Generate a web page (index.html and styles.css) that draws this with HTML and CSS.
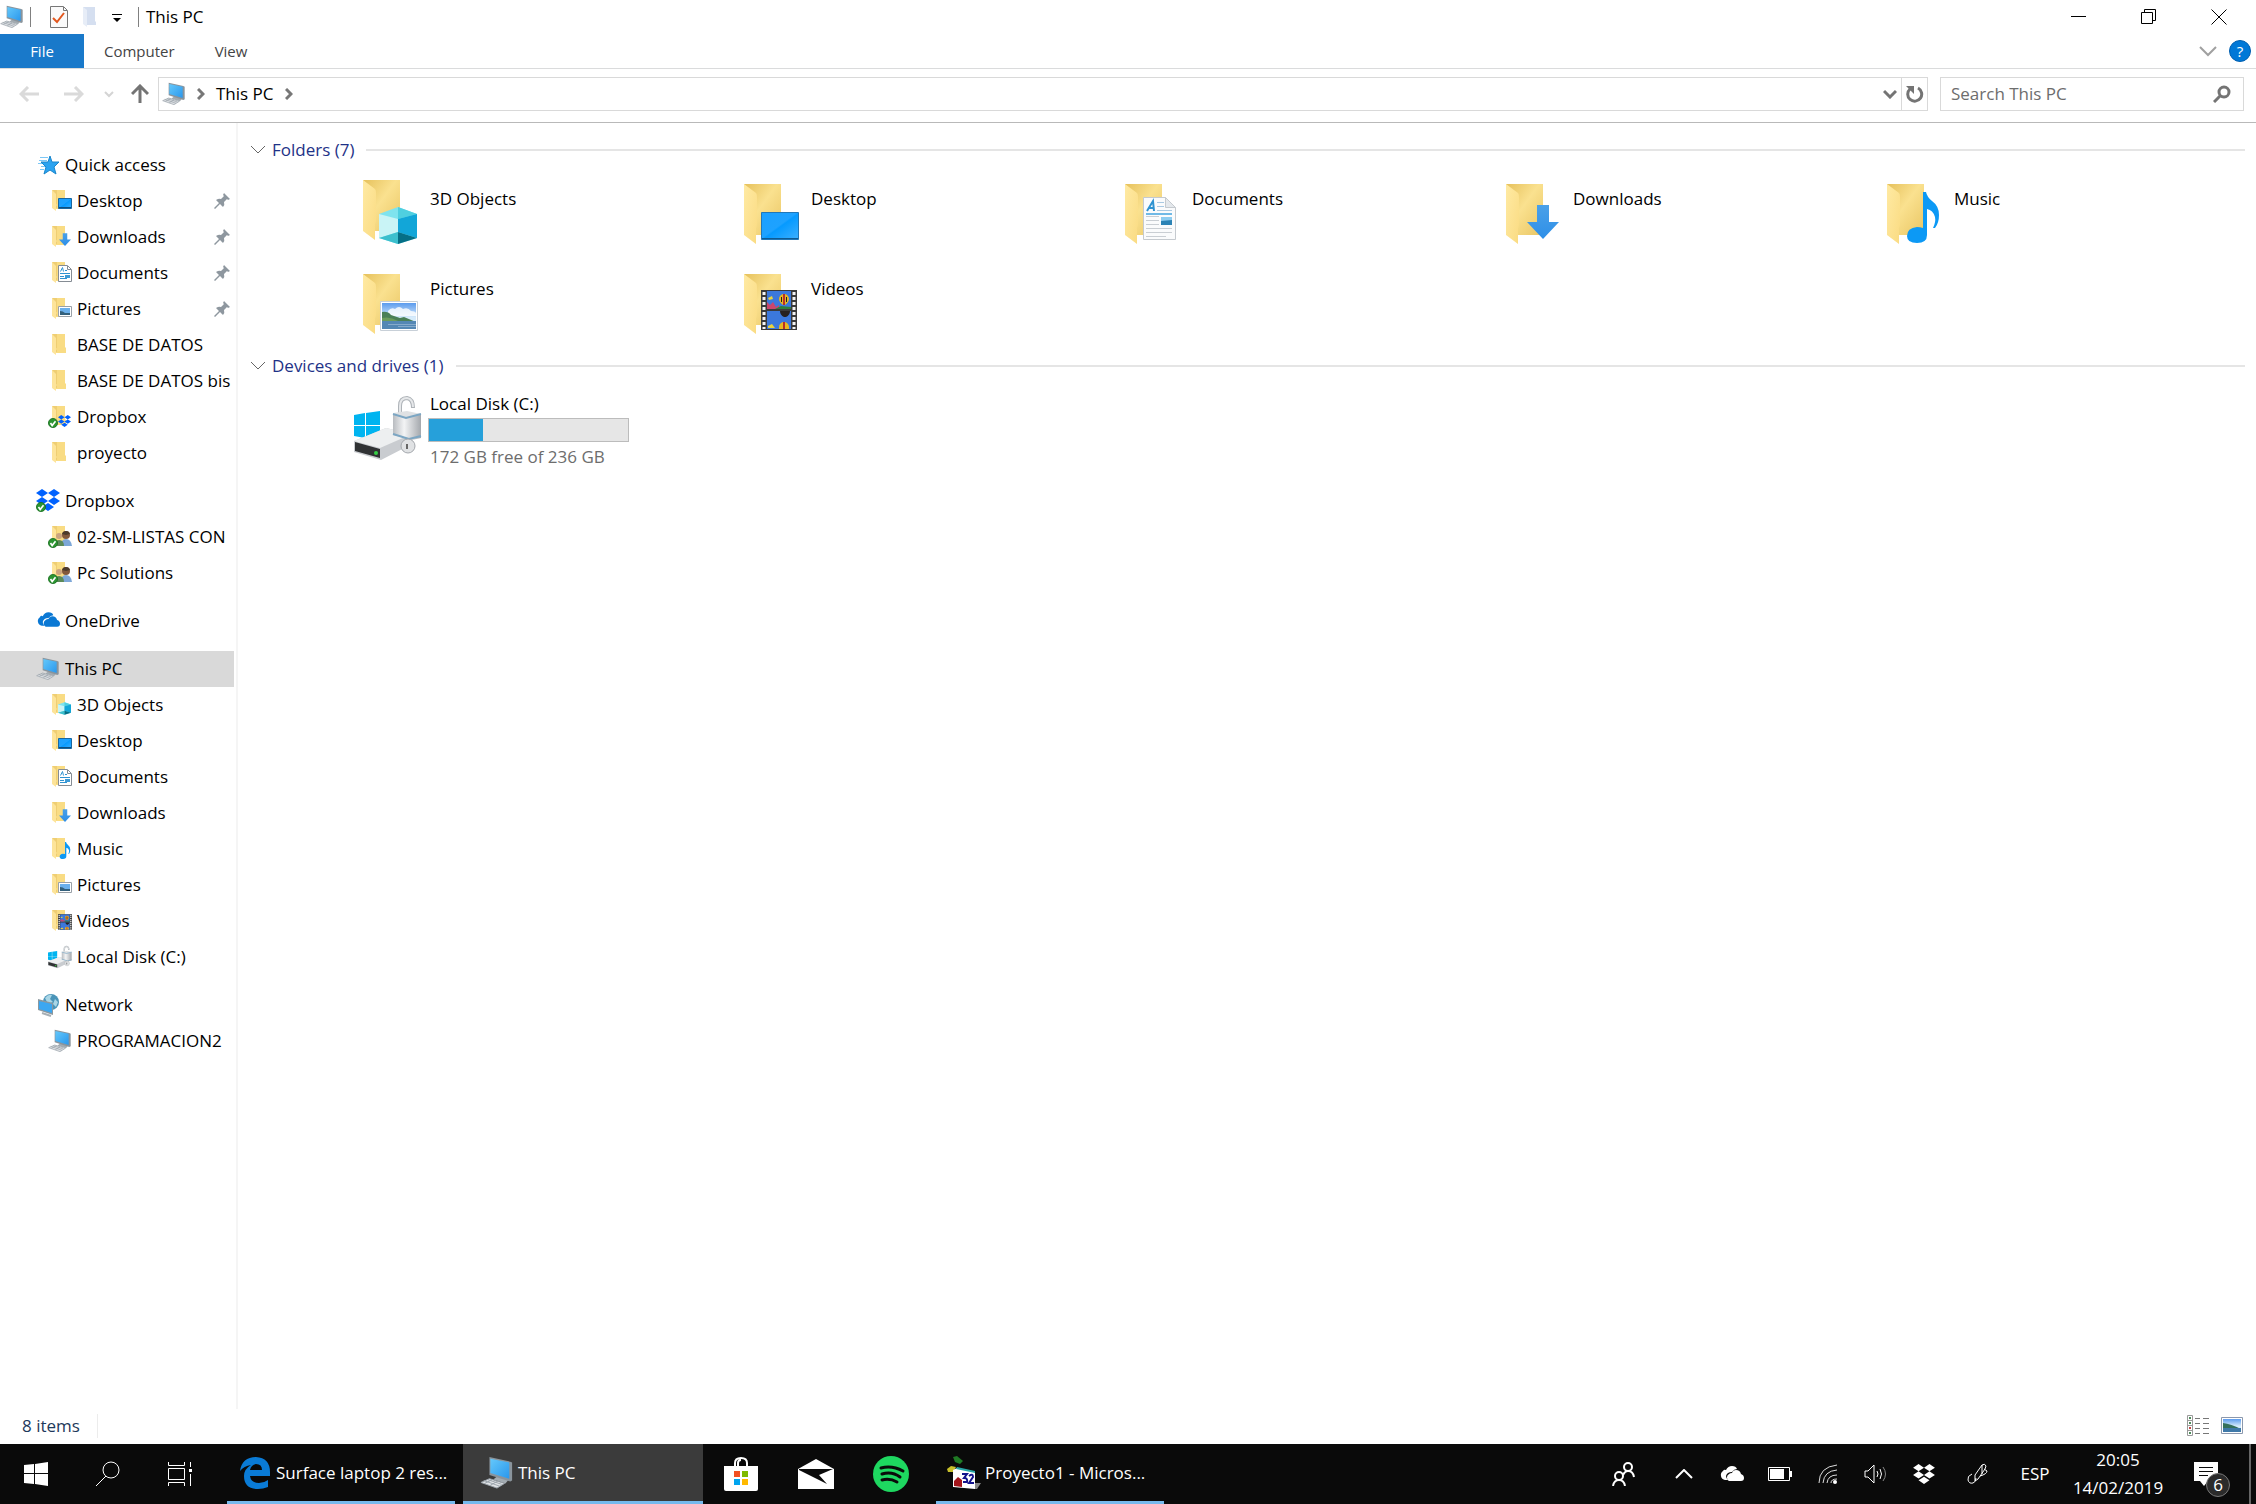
FILE: index.html
```html
<!DOCTYPE html>
<html lang="en">
<head>
    <meta charset="UTF-8">
    <meta name="viewport" content="width=device-width, initial-scale=1.0">
    <title>This PC</title>
    <link rel="stylesheet" href="styles.css">
</head>
<body>
    <!-- Shared icons -->
    <svg class="defs" width="0" height="0" aria-hidden="true">
        <defs>
            <linearGradient id="gBack" x1="0" y1="0" x2="1" y2="1">
                <stop offset="0" stop-color="#e6c15c"/>
                <stop offset=".45" stop-color="#fae18f"/>
                <stop offset="1" stop-color="#e9c563"/>
            </linearGradient>
            <linearGradient id="gFront" x1="0" y1="0" x2="1" y2="1">
                <stop offset="0" stop-color="#ffeaa3"/>
                <stop offset="1" stop-color="#fadb82"/>
            </linearGradient>
            <linearGradient id="gScreen" x1="0" y1="0" x2="1" y2="1">
                <stop offset="0" stop-color="#1ba0ff"/>
                <stop offset=".48" stop-color="#1ea2ff"/>
                <stop offset=".52" stop-color="#069aff"/>
                <stop offset="1" stop-color="#3eb0ff"/>
            </linearGradient>
            <linearGradient id="gMonitor" x1="0" y1="0" x2="1" y2="1">
                <stop offset="0" stop-color="#64c8fb"/>
                <stop offset="1" stop-color="#2a97ec"/>
            </linearGradient>
            <linearGradient id="gSky" x1="0" y1="0" x2="0" y2="1">
                <stop offset="0" stop-color="#5b9bee"/>
                <stop offset=".55" stop-color="#d6ebfb"/>
            </linearGradient>
            <linearGradient id="gMetal" x1="0" y1="0" x2="1" y2="0">
                <stop offset="0" stop-color="#b9bcc0"/>
                <stop offset=".4" stop-color="#f3f4f5"/>
                <stop offset="1" stop-color="#a4a8ad"/>
            </linearGradient>
            <linearGradient id="gDown" x1="0" y1="0" x2="0" y2="1">
                <stop offset="0" stop-color="#4aa0e8"/>
                <stop offset="1" stop-color="#2e8fe8"/>
            </linearGradient>
        </defs>

        <symbol id="folder-lg" viewBox="0 0 64 64">
            <path fill="url(#gBack)" d="M3 4h37v51H15z"/>
            <path fill="url(#gFront)" d="M3 4l12 9q1 1 1 4v28l-1 3v16L3 55z"/>
        </symbol>
        <symbol id="folder" viewBox="0 0 24 24">
            <path fill="#f9dc84" d="M4 1h13v13l1 1v5H8z"/>
            <path fill="#e8c467" d="M4 1h5v18H8z" opacity=".6"/>
            <path fill="#fde49a" d="M4 1l4 4v10l1 1-1 1v5l-4-3z"/>
        </symbol>
        <symbol id="picture" viewBox="0 0 38 30">
            <path fill="#fff" stroke="#c8d0d8" d="M.5.5h37v29H.5z"/>
            <path fill="url(#gSky)" d="M2 2h34v26H2z"/>
            <path fill="#fff" opacity=".8" d="M8 10q3-4 7-2 4-4 8 0 5-2 8 2 4 0 5 2v3H8z"/>
            <path fill="#4b8057" d="M2 11q6-1 9 3l9 3 4-1 12 5H2z"/>
            <path fill="#6c9c5c" d="M2 17q8-2 16 3H2z"/>
            <path fill="#5387b4" d="M2 20h34v8H2z"/>
            <path fill="#85aacb" d="M8 23h28v1H8zm10 2h18v1H18z"/>
        </symbol>
        <symbol id="film" viewBox="0 0 36 40">
            <path fill="#3a3a3a" d="M0 0h36v40H0z"/>
            <path stroke="#f4f4f4" stroke-width="3" stroke-dasharray="3 2" d="M3 2v37M33 2v37"/>
            <path fill="#3b78dc" d="M6 1h24v18H6zm0 20h24v18H6z"/>
            <path fill="#c9466e" d="M6 19v-7l3 3 3-3 3 5 3-2v4z"/>
            <path fill="#2f7e3c" d="M14 19l6-3 10 1v2z"/>
            <path fill="#e9d33f" d="M7 8l4-2 1 3-4 1zm0 28l4-2 3 4H7z"/>
            <path fill="#e8b722" d="M18 9a5 5 0 0 1 10 0q0 3-4 6h-2q-4-3-4-6zm0 28a5 5 0 0 1 10 0v2H18z"/>
            <path fill="#b82d29" d="M22 4h2v11h-2zM22 32h2v7h-2z"/>
            <path fill="#26201f" d="M19 21h10q0 4-4 6h-2q-4-2-4-6zM20 7h1v5h-1zm5 0h1v5h-1z"/>
        </symbol>
        <symbol id="doc" viewBox="0 0 33 43">
            <path fill="#fafbfc" stroke="#c5cacf" d="M.5.5h22l10 10v32H.5z"/>
            <path fill="#e4e8ec" stroke="#c5cacf" d="M22.5.5v10h10z"/>
            <path stroke="#a9c9e2" d="M14 5.500h7M14 9.500h7M14 13.500h15"/>
            <path stroke="#c9ced3" d="M3 19.500h13M3 23.500h13M3 27.500h13M3 31.500h26M3 35.500h26M3 39.500h20"/>
            <path stroke="#6fb9e6" stroke-width="2" d="M3 17h26"/>
            <path fill="none" stroke="#2f93d1" stroke-width="2" d="M4 14L10 4l1 10M6 11h5"/>
            <path fill="#2c83b5" d="M18 20h11v8H18z"/>
            <path fill="#8cccf0" d="M18 20h11v3l-11 1z"/>
        </symbol>
        <symbol id="doc-sm" viewBox="0 0 14 17">
            <path fill="#fff" stroke="#858c94" d="M.5.5h9l4 4v12H.5z"/>
            <path fill="none" stroke="#858c94" d="M9.500 1v3.500H13"/>
            <path fill="none" stroke="#2f93d1" d="M2.500 6.500l2-4 1 4M7 5.500h2M2 8.500h10M2 11.500h4M2 13.500h7"/>
            <path fill="#3f9bd6" d="M7 10h5v3H7z"/>
        </symbol>
        <symbol id="cube" viewBox="0 0 38 37">
            <path fill="#7fe3ee" d="M19 0l19 7v24l-19 6L0 31V7z"/>
            <path fill="#4fcfe0" d="M19 0l19 7-19 5z"/>
            <path fill="#c9f4f6" d="M0 7l19 5v13L0 31z"/>
            <path fill="#12a6d8" d="M38 7l-19 5v13l19 6z"/>
            <path fill="#3cbfcd" d="M0 31l19-6v12z"/>
            <path fill="#056f86" d="M19 25l19 6-19 6z"/>
        </symbol>
        <symbol id="arrow-down" viewBox="0 0 32 34">
            <path fill="url(#gDown)" d="M10 0h12v17h10L16 34 0 17h10z"/>
        </symbol>
        <symbol id="note" viewBox="0 0 32 51">
            <path fill="#0c99f5" d="M16 0h3q1 5 6 9 7 5 7 14 0 8-4 13h-2q3-6 2-11-2-7-8-8v26q0 8-10 8Q0 51 0 44q0-8 10-9 3 0 6 1z"/>
        </symbol>
        <symbol id="pc" viewBox="0 0 36 36">
            <path fill="#a3abb1" d="M20 20l11 4-4 5-13-4z"/>
            <path fill="#8a949c" d="M10 1l22 5 2 1v19l-2 1-22-7z"/>
            <path fill="url(#gMonitor)" d="M11 3l20 4v17l-20-6z"/>
            <path fill="#dfe2e5" stroke="#9aa3aa" d="M1 28l9-4 16 5-8 5z"/>
            <path fill="none" stroke="#9aa3aa" d="M4 26l17 6M8 25l15 5M13 25l-8 4M18 27l-7 4"/>
        </symbol>
        <symbol id="dropbox" viewBox="0 0 24 22">
            <path d="M6 0l6 4-6 4-6-4zm12 0l6 4-6 4-6-4zM6 8l6 4-6 4-6-4zm12 0l6 4-6 4-6-4zm-6 6l6 4-6 4-6-4z"/>
        </symbol>
        <symbol id="check" viewBox="0 0 12 12">
            <circle cx="6" cy="6" r="5.500" fill="#2b9430" stroke="#1c7023"/>
            <path fill="none" stroke="#fff" stroke-width="2" d="M3 6l2 3 4-5"/>
        </symbol>
        <symbol id="star" viewBox="0 0 24 24">
            <path stroke="#7cc7f6" d="M4 4.500h8M3 7.500h8M2 10.500h6M5 13.500h4M4 16.500h4"/>
            <path fill="#2ba3f0" stroke="#1a86cc" d="M14 3l2 6h7l-5 5 2 7-6-4-6 4 2-7-5-5h7z"/>
        </symbol>
        <symbol id="cloud" viewBox="0 0 24 16">
            <path d="M5 14A5 5 0 0 1 3 5q1-2 3-1 2-4 6-4 4 0 5 3-3 0-5 3-5 0-6 4 0 2 2 4z"/>
            <path d="M9 15a4 4 0 0 1 0-7q1-1 3-1 1-3 4-3 4 0 5 4 3 1 3 4t-3 3z"/>
        </symbol>
        <symbol id="people" viewBox="0 0 24 24">
            <circle cx="18" cy="10" r="4" fill="#82583c"/>
            <path fill="#7da7d8" d="M13 21q0-7 5-7t6 7z"/>
            <circle cx="11" cy="11" r="3" fill="#caa47f"/>
            <path fill="#5c8a58" d="M6 21q0-6 5-6t5 6z"/>
            <path fill="#4c3a2b" d="M14 9q1-3 4-3t4 3l-4 1z"/>
        </symbol>
        <symbol id="drive" viewBox="0 0 68 64">
            <path fill="#00b4f0" d="M0 19l11-2v12H0zm12-2l14-2v14H12zM0 30h11v12L0 40zm12 0h14v14l-14-2z"/>
            <path fill="#c9ccd0" d="M0 45l32-13 26 6v10L27 64 0 56z"/>
            <path fill="#edeff0" d="M0 45l32-13 26 6-32 14z"/>
            <path fill="#303234" d="M1 46l25 7v9L1 55z"/>
            <circle cx="22" cy="57" r="2" fill="#35cf45"/>
            <path fill="none" stroke="#aeb3b8" stroke-width="4" d="M46 20V10q0-8 7-8 6 1 6 10"/>
            <path fill="none" stroke="#e6e8ea" stroke-width="2" d="M46 20V10q0-8 7-8 6 1 6 9"/>
            <path fill="url(#gMetal)" d="M39 18l12 4 16-4v24l-9 2-19-5z"/>
            <path fill="#dfe1e3" d="M39 17l14-2 14 3-15 4z"/>
            <path fill="none" stroke="#7ca6c3" stroke-width="2" d="M39 18l13 4 15-4M39 38l16 5 12-3"/>
            <circle cx="54" cy="50" r="7" fill="#e0e2e4" stroke="#a4a8ad"/>
            <path stroke="#666" stroke-width="2" d="M53 48v5"/>
        </symbol>
        <symbol id="network" viewBox="0 0 24 24">
            <circle cx="15" cy="9" r="8" fill="#4a94b8"/>
            <path fill="#a9d6e6" d="M9 5q3-4 7-3l-2 4 3 3-5 2zM19 6l3 3-2 5-3-3z"/>
            <path fill="#8b989f" d="M2 6l15 4v12L2 17z"/>
            <path fill="#3ca7f1" d="M3 8l13 3v9L3 16z"/>
            <path stroke="#a7afb5" stroke-width="2" d="M6 20l9 3"/>
        </symbol>
        <symbol id="pin" viewBox="0 0 16 16">
            <path fill="#8e979f" d="M10 0l6 6-2 1-1-1-3 3q1 3-1 5L6 11l-5 5-1-1 5-5-3-3q3-2 5-1l3-3-1-1z"/>
        </symbol>

        <!-- Small folder icons with their badge -->
        <symbol id="sm-desktop" viewBox="0 0 24 24">
            <use href="#folder"/>
            <path fill="url(#gScreen)" stroke="#1a679f" d="M10.500 9.500h13v10h-13z"/>
            <path stroke="#0c4f80" d="M11 18.500h12"/>
        </symbol>
        <symbol id="sm-downloads" viewBox="0 0 24 24">
            <use href="#folder"/>
            <use href="#arrow-down" x="11" y="8" width="12" height="13"/>
        </symbol>
        <symbol id="sm-documents" viewBox="0 0 24 24">
            <use href="#folder"/>
            <use href="#doc-sm" x="10" y="4" width="14" height="17"/>
        </symbol>
        <symbol id="sm-pictures" viewBox="0 0 24 24">
            <use href="#folder"/>
            <path fill="#fff" stroke="#9aa1a8" d="M10.500 9.500h13v10h-13z"/>
            <path fill="#6bb0ec" d="M12 11h10v7H12z"/>
            <path fill="#33607c" d="M12 14q3 0 5 2h5v2H12z"/>
        </symbol>
        <symbol id="sm-objects" viewBox="0 0 24 24">
            <use href="#folder"/>
            <use href="#cube" x="10" y="9" width="13" height="13"/>
        </symbol>
        <symbol id="sm-music" viewBox="0 0 24 24">
            <use href="#folder"/>
            <use href="#note" x="11" y="5" width="12" height="17"/>
        </symbol>
        <symbol id="sm-videos" viewBox="0 0 24 24">
            <use href="#folder"/>
            <use href="#film" x="10" y="5" width="14" height="16"/>
        </symbol>
        <symbol id="sm-dropbox" viewBox="0 0 24 24">
            <use href="#folder"/>
            <use href="#dropbox" x="10" y="10" width="13" height="12" fill="#0061fe"/>
            <use href="#check" x="0" y="13" width="10" height="10"/>
        </symbol>
        <symbol id="sm-shared" viewBox="0 0 24 24">
            <use href="#folder"/>
            <use href="#people"/>
            <use href="#check" x="0" y="13" width="10" height="10"/>
        </symbol>
    </svg>

    <header class="titlebar">
        <svg class="icon-24"><use href="#pc"/></svg>
        <span class="sep"></span>
        <div class="quick-tools">
            <button type="button" aria-label="Properties">
                <svg width="18" height="22" viewBox="0 0 18 22">
                    <path fill="#fafafa" stroke="#777" d="M.5.5h13l4 4v17H.5z"/>
                    <path fill="none" stroke="#777" d="M13.500 1v3.500H17"/>
                    <path fill="none" stroke="#e2571e" stroke-width="2" d="M3 12l4 4 7-9"/>
                </svg>
            </button>
            <button type="button" aria-label="New folder">
                <svg width="16" height="22" viewBox="0 0 16 22">
                    <path fill="#d5dff0" d="M1 1h12v14l1 1v3H4z"/>
                    <path fill="#e7edf7" d="M1 1l4 3v17l-4-3z"/>
                </svg>
            </button>
            <button type="button" aria-label="Customize">
                <svg width="10" height="10" viewBox="0 0 10 10"><path d="M0 2h10v1H0zm1 4h8L5 10z"/></svg>
            </button>
        </div>
        <span class="sep"></span>
        <h1>This PC</h1>
        <div class="window-buttons">
            <button type="button" aria-label="Minimize">
                <svg width="16" height="16" viewBox="0 0 16 16"><path stroke="#000" d="M0 7.500h15"/></svg>
            </button>
            <button type="button" aria-label="Restore">
                <svg width="16" height="16" viewBox="0 0 16 16"><path fill="none" stroke="#000" d="M.5 3.500h11v11H.5zM3.500 3V.5h11v11H12"/></svg>
            </button>
            <button type="button" aria-label="Close">
                <svg width="16" height="16" viewBox="0 0 16 16"><path stroke="#000" d="M.5.5l15 15M15.500.5l-15 15"/></svg>
            </button>
        </div>
    </header>

    <nav class="ribbon">
        <button type="button" class="tab file">File</button>
        <button type="button" class="tab">Computer</button>
        <button type="button" class="tab">View</button>
        <div class="ribbon-right">
            <button type="button" aria-label="Expand the ribbon">
                <svg width="18" height="12" viewBox="0 0 18 12"><path fill="none" stroke="#a0a0a0" stroke-width="2" d="M1 2l8 8 8-8"/></svg>
            </button>
            <button type="button" class="help" aria-label="Help">?</button>
        </div>
    </nav>

    <div class="toolbar">
        <div class="history">
            <button type="button" aria-label="Back">
                <svg width="20" height="16" viewBox="0 0 20 16"><path fill="none" stroke="#dadada" stroke-width="3" d="M20 8H2M9 1L2 8l7 7"/></svg>
            </button>
            <button type="button" aria-label="Forward">
                <svg width="20" height="16" viewBox="0 0 20 16"><path fill="none" stroke="#dadada" stroke-width="3" d="M0 8h18M11 1l7 7-7 7"/></svg>
            </button>
            <button type="button" class="recent" aria-label="Recent locations">
                <svg width="10" height="8" viewBox="0 0 10 8"><path fill="none" stroke="#d4d4d4" stroke-width="2" d="M1 2l4 4 4-4"/></svg>
            </button>
            <button type="button" class="up" aria-label="Up">
                <svg width="18" height="20" viewBox="0 0 18 20"><path fill="none" stroke="#747474" stroke-width="3" d="M9 19V3M1 10l8-8 8 8"/></svg>
            </button>
        </div>
        <div class="address">
            <svg class="icon-24"><use href="#pc"/></svg>
            <svg width="8" height="12" viewBox="0 0 8 12"><path fill="none" stroke="#777" stroke-width="3" d="M1 1l5 5-5 5"/></svg>
            <a href="#">This PC</a>
            <svg width="8" height="12" viewBox="0 0 8 12"><path fill="none" stroke="#777" stroke-width="3" d="M1 1l5 5-5 5"/></svg>
            <button type="button" class="drop" aria-label="Previous locations">
                <svg width="14" height="10" viewBox="0 0 14 10"><path fill="none" stroke="#747474" stroke-width="3" d="M1 2l6 6 6-6"/></svg>
            </button>
            <button type="button" class="refresh" aria-label="Refresh">
                <svg width="18" height="18" viewBox="0 0 18 18">
                    <path fill="none" stroke="#747474" stroke-width="3" d="M12 3a7 7 0 1 1-8 1"/>
                    <path fill="#747474" d="M0 1h8v8z"/>
                </svg>
            </button>
        </div>
        <form class="search">
            <input type="text" placeholder="Search This PC" aria-label="Search This PC">
            <button type="button" aria-label="Search">
                <svg width="18" height="18" viewBox="0 0 18 18"><circle cx="11" cy="7" r="5" fill="none" stroke="#747474" stroke-width="3"/><path stroke="#747474" stroke-width="3" d="M8 10l-7 7"/></svg>
            </button>
        </form>
    </div>

    <div class="body">
        <nav class="sidebar">
            <ul>
                <li><a href="#" class="group"><svg><use href="#star"/></svg><span>Quick access</span></a></li>
                <li><a href="#"><svg><use href="#sm-desktop"/></svg><span>Desktop</span><svg class="pin"><use href="#pin"/></svg></a></li>
                <li><a href="#"><svg><use href="#sm-downloads"/></svg><span>Downloads</span><svg class="pin"><use href="#pin"/></svg></a></li>
                <li><a href="#"><svg><use href="#sm-documents"/></svg><span>Documents</span><svg class="pin"><use href="#pin"/></svg></a></li>
                <li><a href="#"><svg><use href="#sm-pictures"/></svg><span>Pictures</span><svg class="pin"><use href="#pin"/></svg></a></li>
                <li><a href="#"><svg><use href="#folder"/></svg><span>BASE DE DATOS</span></a></li>
                <li><a href="#"><svg><use href="#folder"/></svg><span>BASE DE DATOS bis</span></a></li>
                <li><a href="#"><svg><use href="#sm-dropbox"/></svg><span>Dropbox</span></a></li>
                <li><a href="#"><svg><use href="#folder"/></svg><span>proyecto</span></a></li>
            </ul>
            <ul>
                <li><a href="#" class="group"><svg viewBox="0 0 24 24"><use href="#dropbox" width="24" height="22" fill="#0061fe"/><use href="#check" y="13" width="10" height="10"/></svg><span>Dropbox</span></a></li>
                <li><a href="#"><svg><use href="#sm-shared"/></svg><span>02-SM-LISTAS CON</span></a></li>
                <li><a href="#"><svg><use href="#sm-shared"/></svg><span>Pc Solutions</span></a></li>
            </ul>
            <ul>
                <li><a href="#" class="group"><svg viewBox="0 0 24 24"><use href="#cloud" x="1" y="3" width="23" height="16" fill="#0a78d4"/></svg><span>OneDrive</span></a></li>
            </ul>
            <ul>
                <li><a href="#" class="group selected"><svg><use href="#pc"/></svg><span>This PC</span></a></li>
                <li><a href="#"><svg><use href="#sm-objects"/></svg><span>3D Objects</span></a></li>
                <li><a href="#"><svg><use href="#sm-desktop"/></svg><span>Desktop</span></a></li>
                <li><a href="#"><svg><use href="#sm-documents"/></svg><span>Documents</span></a></li>
                <li><a href="#"><svg><use href="#sm-downloads"/></svg><span>Downloads</span></a></li>
                <li><a href="#"><svg><use href="#sm-music"/></svg><span>Music</span></a></li>
                <li><a href="#"><svg><use href="#sm-pictures"/></svg><span>Pictures</span></a></li>
                <li><a href="#"><svg><use href="#sm-videos"/></svg><span>Videos</span></a></li>
                <li><a href="#"><svg><use href="#drive"/></svg><span>Local Disk (C:)</span></a></li>
            </ul>
            <ul>
                <li><a href="#" class="group"><svg><use href="#network"/></svg><span>Network</span></a></li>
                <li><a href="#"><svg><use href="#pc"/></svg><span>PROGRAMACION2</span></a></li>
            </ul>
        </nav>

        <main class="content">
            <section>
                <h2>
                    <svg width="16" height="10" viewBox="0 0 16 10"><path fill="none" stroke="#666" d="M1 1l7 7 7-7"/></svg>
                    Folders (7)
                </h2>
                <div class="tiles">
                    <a href="#" class="tile">
                        <svg viewBox="0 0 64 64"><use href="#folder-lg" y="-4" width="64" height="64"/><use href="#cube" x="19" y="27" width="38" height="37"/></svg>
                        <span>3D Objects</span>
                    </a>
                    <a href="#" class="tile">
                        <svg viewBox="0 0 64 64"><use href="#folder-lg"/><path fill="url(#gScreen)" stroke="#2177b8" d="M20.500 32.500h37v27h-37z"/><path stroke="#0e5a92" d="M21 58.500h36"/></svg>
                        <span>Desktop</span>
                    </a>
                    <a href="#" class="tile">
                        <svg viewBox="0 0 64 64"><use href="#folder-lg"/><use href="#doc" x="21" y="17" width="33" height="43"/></svg>
                        <span>Documents</span>
                    </a>
                    <a href="#" class="tile">
                        <svg viewBox="0 0 64 64"><use href="#folder-lg"/><use href="#arrow-down" x="24" y="25" width="32" height="34"/></svg>
                        <span>Downloads</span>
                    </a>
                    <a href="#" class="tile">
                        <svg viewBox="0 0 64 64"><use href="#folder-lg"/><use href="#note" x="23" y="12" width="32" height="51"/></svg>
                        <span>Music</span>
                    </a>
                    <a href="#" class="tile">
                        <svg viewBox="0 0 64 64"><use href="#folder-lg"/><use href="#picture" x="20" y="31" width="38" height="30"/></svg>
                        <span>Pictures</span>
                    </a>
                    <a href="#" class="tile">
                        <svg viewBox="0 0 64 64"><use href="#folder-lg"/><use href="#film" x="20" y="20" width="36" height="40"/></svg>
                        <span>Videos</span>
                    </a>
                </div>
            </section>

            <section>
                <h2>
                    <svg width="16" height="10" viewBox="0 0 16 10"><path fill="none" stroke="#666" d="M1 1l7 7 7-7"/></svg>
                    Devices and drives (1)
                </h2>
                <div class="tiles">
                    <a href="#" class="tile drive">
                        <svg><use href="#drive"/></svg>
                        <div class="drive-info">
                            <span id="diskName">Local Disk (C:)</span>
                            <div class="bar" role="progressbar" aria-labelledby="diskName" aria-valuenow="27">
                                <div class="bar-fill" style="width: 27%"></div>
                            </div>
                            <span class="free">172 GB free of 236 GB</span>
                        </div>
                    </a>
                </div>
            </section>
        </main>
    </div>

    <footer class="statusbar">
        <span class="count">8 items</span>
        <div class="view-buttons">
            <button type="button" aria-label="Details view">
                <svg width="22" height="22" viewBox="0 0 22 22">
                    <path fill="none" stroke="#9a9a9a" d="M.5.5h5v20h-5zM1 5.500h5M1 10.500h5M1 15.500h5"/>
                    <path stroke="#777" d="M8 3.500h5M16 3.500h6M8 8.500h5M16 8.500h6M8 13.500h5M16 13.500h6M8 18.500h5M16 18.500h6"/>
                    <path fill="#4d8a5a" d="M2 2h2v2H2zm0 5h2v2H2zm0 10h2v2H2z"/>
                    <path fill="#c14545" d="M2 12h2v2H2z"/>
                </svg>
            </button>
            <button type="button" aria-label="Large icons view">
                <svg width="22" height="17" viewBox="0 0 22 17">
                    <path fill="#fff" stroke="#8b98ad" d="M.5.5h21v16H.5z"/>
                    <path fill="url(#gSky)" d="M2 2h18v13H2z"/>
                    <path fill="#35705c" d="M2 6q8 1 18 6H2z"/>
                    <path fill="#3f79a8" d="M2 11h18v4H2z"/>
                </svg>
            </button>
        </div>
    </footer>

    <div class="taskbar">
        <button type="button" class="task" aria-label="Start">
            <svg width="24" height="24" viewBox="0 0 24 24"><path fill="#fff" d="M0 3l10-1v9H0zm11-1l13-2v11H11zM0 12h10v10L0 21zm11 0h13v12l-13-2z"/></svg>
        </button>
        <button type="button" class="task" aria-label="Search">
            <svg width="26" height="26" viewBox="0 0 26 26"><circle cx="16" cy="9" r="8" fill="none" stroke="#fff"/><path stroke="#fff" d="M11 15L1 25"/></svg>
        </button>
        <button type="button" class="task" aria-label="Task view">
            <svg width="26" height="24" viewBox="0 0 26 24"><path fill="none" stroke="#fff" d="M1.500 0v3.500h16V0M1.500 6.500h16v11h-16zM1.500 24v-3.500h16V24M23.500 0v5M23.500 12v12"/><path fill="#fff" d="M22 7h3v3h-3z"/></svg>
        </button>
        <button type="button" class="app first">
            <svg viewBox="0 0 34 34"><path fill="#0a7bd6" d="M2 15Q4 1 18 1q14 1 14 15v4H12q1 7 9 7 5 0 9-3v7q-5 2-10 2Q6 33 6 20q0-7 7-11Q6 10 2 15zm10-1h12q0-6-6-6-5 1-6 6z"/></svg>
            Surface laptop 2 res...
        </button>
        <button type="button" class="app active">
            <svg><use href="#pc"/></svg>
            This PC
        </button>
        <button type="button" class="launch" aria-label="Store">
            <svg width="36" height="36" viewBox="0 0 36 36">
                <path fill="none" stroke="#fff" stroke-width="2" d="M12 11V7q0-5 6-5t6 5v4M15 11V7q0-3 3-3"/>
                <path fill="#fff" d="M1 10h34v23q0 2-2 2H3q-2 0-2-2z"/>
                <path fill="#f25022" d="M11 15h6v6h-6z"/><path fill="#7fba00" d="M19 15h6v6h-6z"/>
                <path fill="#00a4ef" d="M11 23h6v6h-6z"/><path fill="#ffb900" d="M19 23h6v6h-6z"/>
            </svg>
        </button>
        <button type="button" class="launch" aria-label="Mail">
            <svg width="36" height="30" viewBox="0 0 36 30"><path fill="#fff" d="M0 10L18 0l18 10v20H0z"/><path fill="#0a0a0a" d="M1 10h34l-14 6 8 9L1 11z"/></svg>
        </button>
        <button type="button" class="launch" aria-label="Spotify">
            <svg width="36" height="36" viewBox="0 0 36 36">
                <circle cx="18" cy="18" r="18" fill="#1ed760"/>
                <path fill="none" stroke="#0a0a0a" stroke-width="3" stroke-linecap="round" d="M8 12q11-3 22 3M9 18q10-3 18 3M9 24q8-2 15 2"/>
            </svg>
        </button>
        <button type="button" class="app">
            <svg viewBox="0 0 34 34">
                <path fill="#1f7a24" d="M6 1l4-1 6 5-3 3-5-2z"/>
                <path fill="#c8c02a" d="M0 13l4-3 5 1-3 5H1z"/>
                <path fill="#888" d="M28 27h6l-4 6h-3z"/>
                <path fill="#fff" d="M6 14l4-2 18 4v17L6 31z"/>
                <path fill="#2aa8a8" d="M10 11l18 4v2L9 13z"/>
                <path fill="#a3141a" d="M7 25l4-4 4 3v7l-8-1z"/>
                <path fill="none" stroke="#12128c" stroke-width="2" d="M15 18h5l-3 4q4 0 3 4h-4M22 20q4-3 4 1l-4 6h5"/>
            </svg>
            Proyecto1 - Micros...
        </button>

        <div class="tray">
            <button type="button" class="people" aria-label="People">
                <svg width="24" height="24" viewBox="0 0 24 24"><g fill="none" stroke="#fff" stroke-width="2"><circle cx="16" cy="5" r="4"/><circle cx="7" cy="14" r="4"/><path d="M11 13q2-4 5-4 5 0 6 6M1 24q1-6 6-6 5 0 6 6"/></g></svg>
            </button>
            <button type="button" aria-label="Hidden icons">
                <svg width="18" height="10" viewBox="0 0 18 10"><path fill="none" stroke="#fff" stroke-width="2" d="M1 9l8-8 8 8"/></svg>
            </button>
            <button type="button" aria-label="OneDrive">
                <svg width="24" height="16" fill="#fff"><use href="#cloud"/></svg>
            </button>
            <button type="button" aria-label="Battery">
                <svg width="24" height="14" viewBox="0 0 24 14"><path fill="none" stroke="#fff" d="M.5.5h21v13H.5z"/><path fill="#fff" d="M2 2h14v10H2zM22 4h2v6h-2z"/></svg>
            </button>
            <button type="button" aria-label="Wi-Fi">
                <svg width="20" height="20" viewBox="0 0 20 20"><g fill="none" stroke="#ddd"><path d="M1 19Q1 3 19 1M5 19Q6 7 19 6M9 19q1-8 10-8M13 19q0-4 6-4"/></g><circle cx="17" cy="18" r="2" fill="#fff"/></svg>
            </button>
            <button type="button" aria-label="Volume">
                <svg width="24" height="20" viewBox="0 0 24 20"><g fill="none" stroke="#fff"><path d="M1 7h3l6-6v18l-6-6H1zM13 7q2 3 0 6M16 5q3 5 0 10"/><path stroke="#888" d="M19 3q5 7 0 14"/></g></svg>
            </button>
            <button type="button" aria-label="Dropbox">
                <svg width="22" height="20" fill="#fff"><use href="#dropbox"/></svg>
            </button>
            <button type="button" class="pen" aria-label="Windows Ink">
                <svg width="22" height="22" viewBox="0 0 22 22"><g fill="none" stroke="#fff"><path d="M8 18V12l7-10q3-2 4 1l-1 3-7 10zM15 2v9M5 11q-5 2-4 6 1 4 5 3 3-1 3-5M13 13q7-2 7-5l-3-2"/></g></svg>
            </button>
            <button type="button" class="lang">ESP</button>
            <button type="button" class="clock"><span>20:05</span><span>14/02/2019</span></button>
            <button type="button" class="notify" aria-label="Notifications">
                <svg width="24" height="24" viewBox="0 0 24 24"><path fill="#fff" d="M0 0h24v19H14l-4 5-4-5H0z"/><path stroke="#0a0a0a" stroke-width="1" d="M5 5.500h14M5 9.500h14M5 13.500h9"/></svg>
                <span class="badge">6</span>
            </button>
            <button type="button" class="show-desktop" aria-label="Show desktop"></button>
        </div>
    </div>
</body>
</html>
```
FILE: styles.css
```css
* {
    margin: 0;
    padding: 0;
    box-sizing: border-box;
}

body {
    font-family: 'Segoe UI', 'Open Sans', sans-serif;
    font-size: 17px;
    line-height: 24px;
    color: #000;
    background: #fff;
    min-height: 100vh;
    display: flex;
    flex-direction: column;
}

svg {
    display: block;
    flex-shrink: 0;
}

button {
    display: flex;
    align-items: center;
    justify-content: center;
    font: inherit;
    color: inherit;
    background: none;
    border: none;
}

a {
    color: inherit;
    text-decoration: none;
}

ul {
    list-style: none;
}

.icon-24 {
    width: 24px;
    height: 24px;
}

/* Title bar */
.titlebar {
    display: flex;
    align-items: center;
    height: 34px;
}

.titlebar h1 {
    font-size: 17px;
    font-weight: normal;
    margin-left: 7px;
}

.sep {
    width: 1px;
    height: 20px;
    margin-left: 6px;
    background: #808080;
}

.quick-tools {
    display: flex;
    align-items: center;
    gap: 14px;
    margin: 0 10px 0 19px;
}

.window-buttons {
    display: flex;
    margin: 0 2px 0 auto;
}

.window-buttons button {
    width: 70px;
    height: 34px;
}

/* Ribbon tabs */
.ribbon {
    display: flex;
    height: 35px;
    border-bottom: 1px solid #dadbdc;
    font-size: 15px;
    color: #444;
}

.tab {
    padding: 0 20px;
}

.tab.file {
    width: 84px;
    background: #1979ca;
    color: #fff;
}

.ribbon-right {
    display: flex;
    align-items: center;
    gap: 12px;
    margin-left: auto;
    padding-right: 5px;
}

.help {
    width: 22px;
    height: 22px;
    border: 1px solid #005fb0;
    border-radius: 50%;
    background: #0078d7;
    color: #fff;
}

/* Address bar */
.toolbar {
    display: flex;
    align-items: center;
    height: 54px;
    padding: 0 12px 3px 0;
    border-bottom: 1px solid #b9b9b9;
}

.history {
    display: flex;
    align-items: center;
    width: 158px;
    padding-left: 19px;
    gap: 25px;
}

.history .recent {
    margin-left: -5px;
}

.history .up {
    margin-left: -8px;
}

.address {
    flex: 1;
    display: flex;
    align-items: center;
    height: 34px;
    padding-left: 3px;
    gap: 11px;
    border: 1px solid #d9d9d9;
}

.address .drop {
    width: 22px;
    margin-left: auto;
}

.address .refresh {
    align-self: stretch;
    width: 26px;
    margin-left: -11px;
    border-left: 1px solid #d9d9d9;
}

.search {
    display: flex;
    align-items: center;
    width: 304px;
    height: 34px;
    margin-left: 12px;
    padding: 0 12px 0 10px;
    border: 1px solid #d9d9d9;
}

.search input {
    flex: 1;
    min-width: 0;
    font: inherit;
    border: none;
    outline: none;
}

.search input::placeholder {
    color: #6d6d6d;
    opacity: 1;
}

/* Navigation pane */
.body {
    flex: 1;
    display: flex;
}

.sidebar {
    width: 238px;
    padding: 24px 2px 0 0;
    border-right: 2px solid #f5f5f5;
}

.sidebar ul {
    margin-bottom: 12px;
}

.sidebar a {
    display: flex;
    align-items: center;
    gap: 5px;
    height: 36px;
    padding-left: 48px;
    overflow: hidden;
    white-space: nowrap;
}

.sidebar a.group {
    padding-left: 36px;
}

.sidebar a.selected {
    background: #d9d9d9;
}

.sidebar svg {
    width: 24px;
    height: 24px;
}

.sidebar .pin {
    width: 16px;
    height: 16px;
    margin-left: auto;
    margin-right: 4px;
}

/* Content */
.content {
    flex: 1;
    padding: 12px 11px 0 12px;
}

.content h2 {
    display: flex;
    align-items: center;
    height: 30px;
    gap: 6px;
    font-size: 17px;
    font-weight: normal;
    color: #1e3287;
}

.content h2::after {
    content: '';
    flex: 1;
    height: 2px;
    margin-left: 6px;
    background: #e5e5e5;
}

.tiles {
    display: grid;
    grid-template-columns: repeat(auto-fill, 381px);
    row-gap: 26px;
    padding: 15px 0 17px 80px;
}

.tile {
    display: flex;
    gap: 6px;
    height: 64px;
    padding-left: 30px;
}

.tile > svg {
    width: 64px;
    height: 64px;
}

.tile > span {
    margin-top: 7px;
}

.tile.drive {
    gap: 8px;
    padding-left: 24px;
}

.tile.drive > svg {
    width: 68px;
}

.drive-info {
    margin-top: -4px;
}

.drive-info .bar {
    width: 201px;
    height: 24px;
    margin: 2px 0 3px -2px;
    border: 1px solid #bcbcbc;
    background: #e6e6e6;
}

.bar-fill {
    height: 100%;
    background: #26a0da;
}

.drive-info span {
    display: block;
}

.drive-info .free {
    color: #6d6d6d;
}

/* Status bar */
.statusbar {
    display: flex;
    align-items: center;
    justify-content: space-between;
    height: 35px;
    padding: 0 13px 2px 22px;
    color: #1e395b;
}

.count {
    padding-right: 17px;
    border-right: 1px solid #ececec;
}

.view-buttons {
    display: flex;
    gap: 12px;
}

/* Taskbar */
.taskbar {
    display: flex;
    height: 60px;
    background: #0a0a0a;
    color: #fff;
}

.task {
    width: 72px;
}

.launch {
    width: 75px;
}

.app {
    justify-content: flex-start;
    gap: 4px;
    width: 228px;
    margin-left: 8px;
    padding-left: 11px;
    border-bottom: 3px solid #76b9ed;
    white-space: nowrap;
}

.app.first {
    margin-left: 11px;
}

.app.active {
    width: 240px;
    padding-left: 17px;
    background: #3b3b3b;
}

.app svg {
    width: 34px;
    height: 34px;
}

.tray {
    display: flex;
    margin-left: auto;
}

.tray button {
    width: 48px;
}

.tray .people {
    width: 72px;
}

.tray .pen {
    width: 60px;
}

.tray .lang {
    width: 54px;
}

.tray .clock {
    flex-direction: column;
    gap: 4px;
    width: 112px;
}

.tray .notify {
    position: relative;
    width: 64px;
    margin-right: 11px;
}

.badge {
    position: absolute;
    right: 8px;
    bottom: 7px;
    width: 24px;
    height: 24px;
    border: 1px solid #777;
    border-radius: 50%;
    background: #2b2b2b;
    line-height: 22px;
}

.tray .show-desktop {
    width: 7px;
    border-left: 2px solid #666;
}
```
